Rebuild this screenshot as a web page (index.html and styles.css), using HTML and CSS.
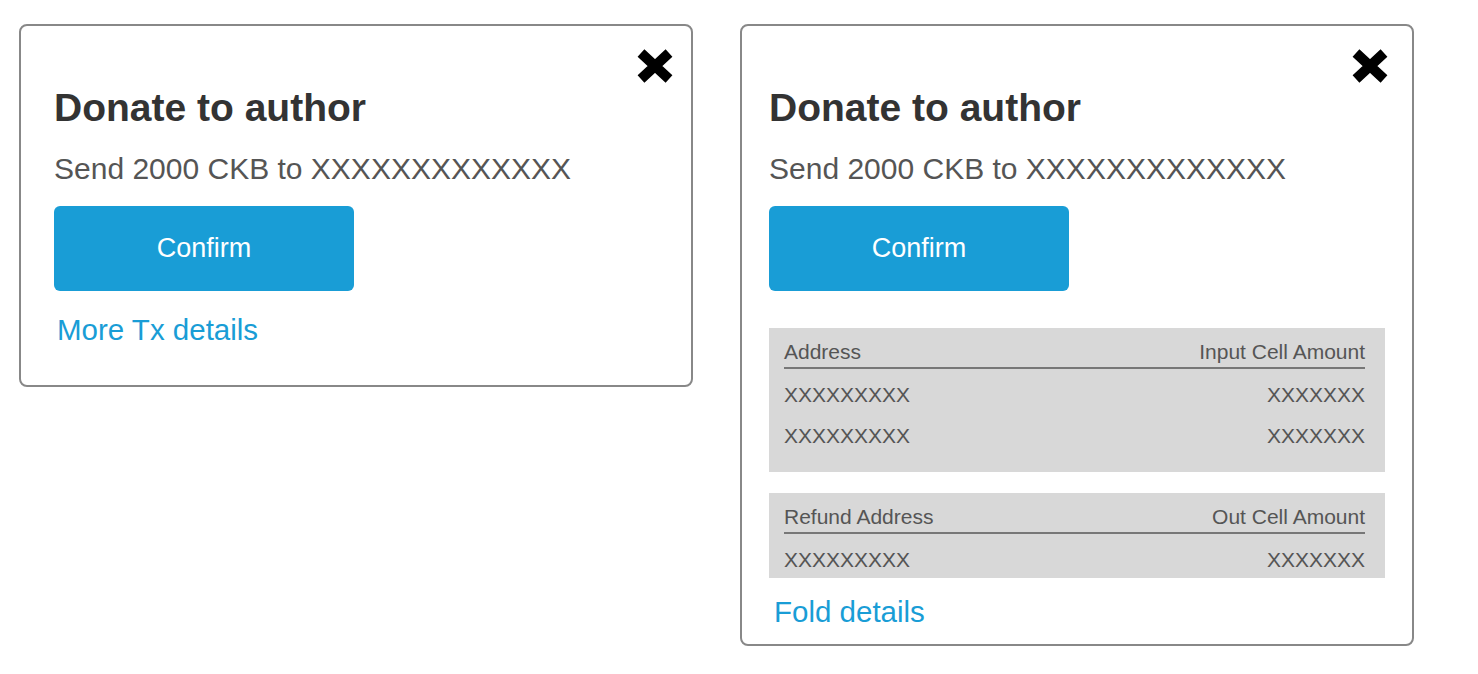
FILE: index.html
```html
<!DOCTYPE html>
<html lang="en">
<head>
<meta charset="utf-8">
<title>Donate to author</title>
<link rel="stylesheet" href="styles.css">
</head>
<body>
<main class="page">
  <section class="card card--collapsed">
    <button class="close" aria-label="Close">
      <svg viewBox="0 0 38 36" width="38" height="36"><path d="M5 5 L33 31 M33 5 L5 31" stroke="#000" stroke-width="10" fill="none"/></svg>
    </button>
    <h1 class="title">Donate to author</h1>
    <p class="send">Send 2000 CKB to XXXXXXXXXXXXX</p>
    <button class="confirm">Confirm</button>
    <a class="link" href="#">More Tx details</a>
  </section>

  <section class="card card--expanded">
    <button class="close" aria-label="Close">
      <svg viewBox="0 0 38 36" width="38" height="36"><path d="M5 5 L33 31 M33 5 L5 31" stroke="#000" stroke-width="10" fill="none"/></svg>
    </button>
    <h1 class="title">Donate to author</h1>
    <p class="send">Send 2000 CKB to XXXXXXXXXXXXX</p>
    <button class="confirm">Confirm</button>
    <div class="details">
      <div class="table table--inputs">
        <div class="thead"><span>Address</span><span>Input Cell Amount</span></div>
        <div class="trow"><span>XXXXXXXXX</span><span>XXXXXXX</span></div>
        <div class="trow"><span>XXXXXXXXX</span><span>XXXXXXX</span></div>
      </div>
      <div class="table table--outputs">
        <div class="thead"><span>Refund Address</span><span>Out Cell Amount</span></div>
        <div class="trow"><span>XXXXXXXXX</span><span>XXXXXXX</span></div>
      </div>
    </div>
    <a class="link link--fold" href="#">Fold details</a>
  </section>
</main>
</body>
</html>
```

FILE: styles.css
```css
* { box-sizing: border-box; }

html, body {
  margin: 0;
  padding: 0;
  background: #fff;
  font-family: "Liberation Sans", Arial, Helvetica, sans-serif;
}

.page {
  display: flex;
  align-items: flex-start;
  gap: 47px;
  padding: 24px 0 0 19px;
}

.card {
  position: relative;
  width: 674px;
  border: 2px solid #888;
  border-radius: 8px;
  display: flex;
  flex-direction: column;
  align-items: flex-start;
  padding: 60px 27px 37px 33px;
}

.card--expanded {
  padding: 60px 27px 14px 27px;
}

.close {
  position: absolute;
  top: 22px;
  right: 17px;
  width: 38px;
  height: 36px;
  padding: 0;
  border: 0;
  background: none;
  cursor: pointer;
}

.card--expanded .close {
  right: 23px;
}

.close svg { display: block; }

.title {
  margin: 0;
  font-size: 39px;
  line-height: 44px;
  font-weight: bold;
  color: #333;
}

.send {
  margin: 21px 0 0;
  font-size: 30px;
  line-height: 36px;
  color: #555;
}

.confirm {
  margin-top: 19px;
  width: 300px;
  height: 85px;
  border: 0;
  border-radius: 6px;
  background: #199dd6;
  color: #fff;
  font-family: inherit;
  font-size: 27px;
  cursor: pointer;
}

.link {
  margin-top: 21px;
  padding-left: 3px;
  font-size: 29.5px;
  line-height: 36px;
  color: #199dd6;
  text-decoration: none;
}

.link--fold {
  margin-top: 16px;
  padding-left: 5px;
}

.details {
  align-self: stretch;
  margin-top: 37px;
  display: flex;
  flex-direction: column;
  gap: 21px;
}

.table {
  background: #d8d8d8;
  padding: 12px 20px 24px 15px;
  color: #555;
  font-size: 21px;
  line-height: 24px;
}

.table--outputs {
  padding-bottom: 6px;
}

.thead {
  display: flex;
  justify-content: space-between;
  padding-bottom: 3px;
  border-bottom: 2px solid #777;
}

.trow {
  display: flex;
  justify-content: space-between;
  padding-top: 14px;
}

.trow + .trow {
  padding-top: 17px;
}
```
